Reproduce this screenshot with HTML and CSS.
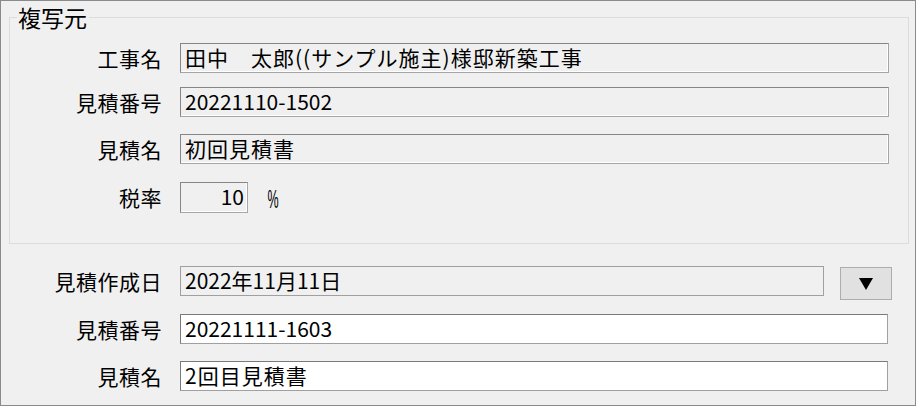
FILE: index.html
```html
<!DOCTYPE html>
<html>
<head>
<meta charset="utf-8"/>
<title>見積複写</title>
<link rel="stylesheet" href="styles.css">
</head>
<body>
<div class="window">

  <fieldset class="group">
    <legend>複写元</legend>

    <div class="row row-a">
      <span class="label">工事名</span>
      <span class="box ro wide jp">田中　太郎((サンプル施主)様邸新築工事</span>
    </div>
    <div class="row row-b">
      <span class="label">見積番号</span>
      <span class="box ro wide">20221110-1502</span>
    </div>
    <div class="row row-c">
      <span class="label">見積名</span>
      <span class="box ro wide jp">初回見積書</span>
    </div>
    <div class="row">
      <span class="label">税率</span>
      <span class="box ro rate">10</span>
      <span class="unit">%</span>
    </div>
  </fieldset>

  <div class="form">
    <div class="row row-d">
      <span class="label">見積作成日</span>
      <span class="box date">2022年11月11日</span>
      <button class="drop" type="button">
        <svg width="14" height="12" viewBox="0 0 14 12"><polygon points="0,0 14,0 7,12" fill="#000"/></svg>
      </button>
    </div>
    <div class="row row-e">
      <span class="label">見積番号</span>
      <span class="box edit">20221111-1603</span>
    </div>
    <div class="row">
      <span class="label">見積名</span>
      <span class="box edit jp">2回目見積書</span>
    </div>
  </div>

</div>
</body>
</html>
```

FILE: styles.css
```css
html, body {
  margin: 0;
  padding: 0;
  background: #f0f0f0;
}

body {
  font-family: "Noto Sans CJK JP", "Noto Sans", sans-serif;
  font-size: 21px;
  color: #000;
}

.window {
  width: 916px;
  height: 406px;
  box-sizing: border-box;
  border: 1px solid #8a8a8a;
  padding: 5px 6px 0 8px;
  background: #f0f0f0;
}

/* group box */
.group {
  margin: 0;
  padding: 15px 19px 30px 0;
  border: 1px solid #dcdcdc;
  height: 238px;
  box-sizing: border-box;
}

.group legend {
  margin-left: 7px;
  padding: 0 2px 0 1px;
  font-size: 23px;
  line-height: 22px;
  height: 22px;
}

.form {
  padding: 22px 0 0 1px;
}

/* rows */
.row {
  display: flex;
  align-items: center;
  height: 30px;
  margin-bottom: 18px;
}
.row-a { margin-bottom: 14px; }
.row-b { margin-bottom: 17px; }
.row-d { margin-bottom: 18px; }
.row-e { margin-bottom: 17px; }

.label {
  width: 152px;
  margin-right: 18px;
  text-align: right;
  white-space: nowrap;
  line-height: 30px;
  letter-spacing: 0.5px;
}

.box {
  display: block;
  height: 30px;
  box-sizing: border-box;
  padding: 0 4px;
  line-height: 27px;
  font-size: 21px;
  white-space: nowrap;
  overflow: hidden;
}

.jp { letter-spacing: 1px; }

.ro {
  background: #f0f0f0;
  border: 1px solid;
  border-color: #868686 #a6a6a6 #a6a6a6 #868686;
  box-shadow: inset -1px -1px 0 #ffffff;
}

.wide { width: 709px; }

.rate {
  width: 68px;
  height: 31px;
  text-align: right;
  padding-right: 3px;
}

.unit {
  display: inline-block;
  margin-left: 14px;
  font-family: "Liberation Sans", sans-serif;
  font-size: 25px;
  line-height: 30px;
  padding-top: 4px;
  transform: scaleX(0.5);
}

.date {
  width: 644px;
  background: #f0f0f0;
  border: 1px solid #a0a0a0;
}

.drop {
  width: 52px;
  height: 33px;
  margin: 5px 0 0 16px;
  padding: 0;
  background: #e1e1e1;
  border: 1px solid #adadad;
  display: flex;
  align-items: center;
  justify-content: center;
}

.edit {
  width: 708px;
  background: #fff;
  border: 1px solid;
  border-color: #7a7a7a #a0a0a0 #a0a0a0 #7a7a7a;
}
```
